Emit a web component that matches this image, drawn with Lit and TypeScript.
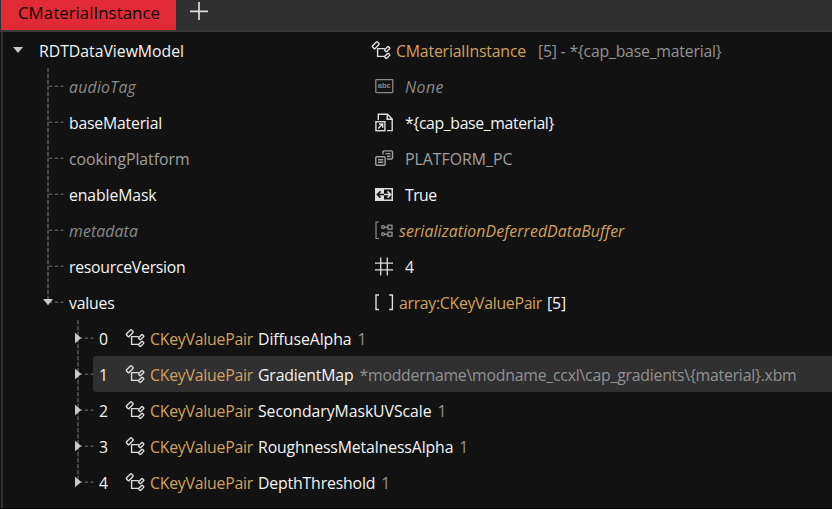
import { LitElement, html, svg, css, nothing } from "lit";
import { customElement, property } from "lit/decorators.js";

// Text run that spreads its letters so that it occupies a given advance width.
@customElement("fit-text")
class FitText extends LitElement {
  @property({ type: Number }) width = 0;
  @property() text = "";
  static styles = css`
    :host { display: inline-block; white-space: pre; flex: none; }
    .run { display: inline-block; }
  `;
  render() {
    return html`<span class="run">${this.text}</span>`;
  }
  firstUpdated() {
    const run = this.renderRoot.querySelector(".run") as HTMLElement;
    const natural = run.getBoundingClientRect().width;
    if (this.width) {
      run.style.letterSpacing = (this.width - natural) / this.text.length + "px";
    }
  }
}

const icons: Record<string, unknown> = {
  class: svg`<g stroke-width="1.4" transform="translate(-.6 0)">
    <rect x="-3.5" y="-1.8" width="7" height="3.6" rx=".8" transform="translate(4.4 4.2) rotate(-45)"/>
    <rect x="-2.7" y="-1.4" width="5.4" height="2.8" rx=".7" transform="translate(15.8 8.2) rotate(-45)"/>
    <rect x="-2.7" y="-1.4" width="5.4" height="2.8" rx=".7" transform="translate(15.8 14.8) rotate(-45)"/>
    <path d="M5.8 7.6H13.4M6.2 7.6V15.4H13.4"/></g>`,
  text: svg`<rect x=".8" y="2.7" width="17" height="13" rx=".8" stroke-width="1.3"/>
    <text x="9.3" y="11.4" class="abc" text-anchor="middle">abc</text>`,
  file: svg`<g stroke-width="1.4"><path d="M3.3 7V1.2H12.5L17.2 6V17.6H12M12.2 1.2V6.2H17.2"/>
    <rect x=".9" y="8.7" width="9" height="9"/><path d="M3.2 15.4L7.5 11.1M4 11H7.7V14.7"/></g>`,
  enum: svg`<g stroke-width="1.4"><path d="M8 5.5V3Q8 1.9 9.1 1.9H16.4Q17.5 1.9 17.5 3V9Q17.5 10 16.4 10H12M10.5 4.6H15.5M12 7.2H15.5"/>
    <rect x=".8" y="7.8" width="9.3" height="8.4" rx="1"/><path d="M3 10.7H8.2M3 13.3H8.2"/></g>`,
  bool: svg`<rect x="0" y="3" width="18" height="13" fill="currentColor" stroke="none"/>
    <rect x="9" y="4.5" width="7.5" height="10" fill="#121212" stroke="none"/>
    <path d="M9 9.5H2.7M5.5 6.4L2.4 9.5L5.5 12.6" stroke="#121212" stroke-width="1.5"/>
    <path d="M9 9.5H15.3M12.5 6.4L15.6 9.5L12.5 12.6" stroke-width="1.5"/>`,
  buffer: svg`<path d="M4 1H1V17.5H4" stroke-width="1.2"/><g stroke-width="1.4">
    <circle cx="8" cy="6.2" r="1.4"/><circle cx="8" cy="13.2" r="1.4"/>
    <path d="M9.5 6.2H13M9.5 13.2H13"/><rect x="13" y="4.2" width="4" height="4"/><rect x="13" y="11.2" width="4" height="4"/></g>`,
  number: svg`<path d="M5.7 .5V18.5M12.3 .5V18.5M0 6.2H18M0 12.8H18" stroke-width="1.3"/>`,
  array: svg`<path d="M4 2H1V16.5H4M14.2 2H17.4V16.5H14.2" stroke-width="1.4"/>`,
};

const icon = (name: string) =>
  html`<svg class="icon" width="19" height="19" viewBox="0 0 19 19">${icons[name]}</svg>`;

type Part = [string, number, string, number?];
interface Field { name: string; w: number; tone: string; icon: string; parts: Part[]; }

const fields: Field[] = [
  { name: "audioTag", w: 67, tone: "dim italic", icon: "text", parts: [["None", 39, "", 11]] },
  { name: "baseMaterial", w: 93, tone: "", icon: "file", parts: [["*{cap_base_material}", 149, "", 11]] },
  { name: "cookingPlatform", w: 120.5, tone: "dim mid", icon: "enum", parts: [["PLATFORM_PC", 107.5, "", 11]] },
  { name: "enableMask", w: 87.5, tone: "", icon: "bool", parts: [["True", 31.5, "", 11]] },
  { name: "metadata", w: 69, tone: "dim italic", icon: "buffer", parts: [["serializationDeferredDataBuffer", 225.5, "gold", 5]] },
  { name: "resourceVersion", w: 116.5, tone: "", icon: "number", parts: [["4", 9, "", 11]] },
  { name: "values", w: 45.5, tone: "", icon: "array", parts: [["array:CKeyValuePair", 143, "gold", 5], ["[5]", 19, "", 5]] },
];

const items = [
  { name: "DiffuseAlpha", w: 93.5, value: "1", vw: 9 },
  { name: "GradientMap", w: 95.5, value: "*moddername\\modname_ccxl\\cap_gradients\\{material}.xbm", vw: 437, selected: true },
  { name: "SecondaryMaskUVScale", w: 173.5, value: "1", vw: 9 },
  { name: "RoughnessMetalnessAlpha", w: 195.3, value: "1", vw: 9 },
  { name: "DepthThreshold", w: 117.3, value: "1", vw: 9 },
];

const fit = (text: string, width: number, cls = "", gap = 0) =>
  html`<fit-text class="${cls} g${gap}" .text=${text} .width=${width}></fit-text>`;

@customElement("app-root")
class AppRoot extends LitElement {
  static styles = css`
    :host {
      display: flex; flex-direction: column; box-sizing: border-box;
      width: 832px; height: 509px; overflow: hidden;
      background: #121212; color: #f4f4f4;
      font: 15.8px/38px "Open Sans", "Noto Sans", sans-serif;
      border-bottom: 1px solid #050505;
    }
    .tabs { flex: none; display: flex; height: 30px; padding-left: 1px; background: #303030; border-bottom: 2px solid #393939; }
    .tab { width: 175px; box-sizing: border-box; padding-left: 17px; background: #e02b37; color: #080808; font-size: 16.8px; line-height: 26px; }
    .plus { margin: 2px 0 0 14px; }
    .tree { flex: 1; border-left: 2px solid #343434; margin-left: 1px; }
    .row { display: flex; height: 36px; }
    .row > *, .label > * { flex: none; }
    .label { display: flex; width: 306px; }
    .value { display: flex; }
    .root { padding-left: 9px; }
    .root .label { width: 333px; }
    .arrow { width: 12px; margin: 12px 15px 0 0; height: 12px; }
    .guide { height: 36px; overflow: visible; }
    .guide path { fill: none; stroke: #555; }
    .guide .tip { fill: #c9c9c9; stroke: none; }
    .field { padding-left: 38px; }
    .field .guide { width: 28px; }
    .item { padding-left: 70px; }
    .item .guide { width: 20px; }
    .row > .body { display: flex; flex: 1; border-radius: 3px 0 0 3px; }
    .selected .body { background: #303030; }
    .index { width: 27px; padding-left: 6px; }
    .icon { flex: none; margin-top: 9px; fill: none; stroke: currentColor; color: #dedede; overflow: visible; }
    .dim, .dim .icon { color: #8a8a8a; }
    .mid, .mid .icon { color: #a0a0a0; }
    .italic { font-style: italic; }
    .abc { font: bold 7.5px "Liberation Sans", sans-serif; fill: currentColor; stroke: none; }
    .gold { color: #d3a15f; }
    .grey { color: #929292; }
    .g5 { margin-left: 5px; }
    .g6 { margin-left: 6px; }
    .g11 { margin-left: 11px; }
    .g12 { margin-left: 12px; }
  `;

  guide(x: number, last: boolean, tip: string) {
    return html`<svg class="guide">
      <path d="M${x} 0V${last ? 18 : 36}" stroke-dasharray="4.4 1.6" stroke-width="1.6" />
      <path d="M${x + 1} 18.2H${x + 15.5}" stroke-dasharray="3.3 2.5" stroke-width="1.6" />
      ${tip === "down" ? svg`<path class="tip" d="M${x - 5} 15H${x + 5}L${x} 21.2Z"/>` : nothing}
      ${tip === "right" ? svg`<path class="tip" d="M${x - 3} 12.7V23.3L${x + 3.3} 18Z"/>` : nothing}
    </svg>`;
  }

  render() {
    return html`
      <div class="tabs">
        <div class="tab">${fit("CMaterialInstance", 142)}</div>
        <svg class="plus" width="18" height="18" viewBox="0 0 18 18"><path d="M0 9.3H18M9 0V18" stroke="#ddd" stroke-width="1.7"/></svg>
      </div>
      <div class="tree">
        <div class="row root">
          <svg class="arrow" viewBox="0 0 12 12"><path d="M1 3H11L6 9Z" fill="#c9c9c9"/></svg>
          <div class="label">${fit("RDTDataViewModel", 145)}</div>
          <div class="value">${icon("class")}${fit("CMaterialInstance", 130, "gold", 5)}${fit("[5] - *{cap_base_material}", 183.5, "grey", 12)}</div>
        </div>
        ${fields.map((f, i) => html`
          <div class="row field ${f.tone}">
            ${this.guide(7, i === fields.length - 1, f.name === "values" ? "down" : "")}
            <div class="label">${fit(f.name, f.w)}</div>
            <div class="value">${icon(f.icon)}${f.parts.map((p) => fit(p[0], p[1], p[2], p[3]))}</div>
          </div>`)}
        ${items.map((it, i) => html`
          <div class="row item ${it.selected ? "selected" : ""}">
            ${this.guide(5, i === items.length - 1, "right")}
            <div class="body">
              <span class="index">${i}</span>
              <div class="value">
                ${icon("class")}${fit("CKeyValuePair", 103, "gold", 5)}${fit(it.name, it.w, "", 5)}${fit(it.value, it.vw, "grey", 6)}
              </div>
            </div>
          </div>`)}
      </div>`;
  }
}
